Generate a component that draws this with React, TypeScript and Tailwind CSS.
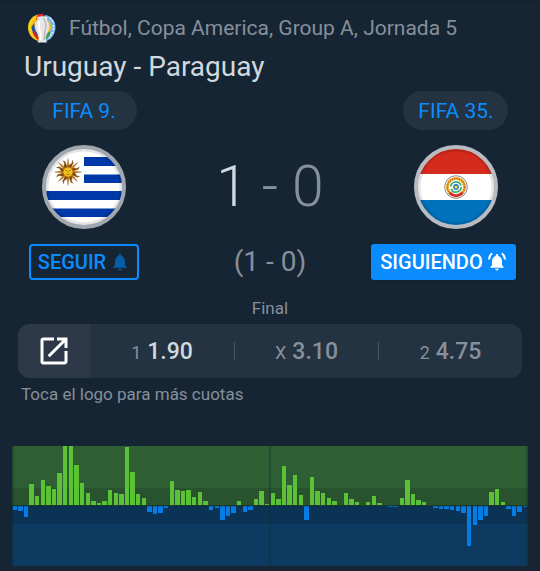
import React from "react";
import { MdNotifications, MdOpenInNew } from "react-icons/md";

type Bar = [x: number, width: number, value: number];

// Attack momentum: positive values belong to the home side, negative to the away side.
const bars: Bar[] = [
  [1, 4, -4], [6, 5, -5], [12, 4, -11], [17, 5, 21], [23, 4, 9], [29, 4, 25], [34, 5, 19], [40, 4, 16],
  [45, 5, 32], [51, 4, 59], [57, 4, 59], [62, 5, 40], [68, 4, 22], [74, 4, 12], [79, 5, 4], [85, 4, 2],
  [90, 5, 4], [96, 4, 15], [102, 4, 12], [107, 5, 11], [113, 4, 58], [118, 5, 33], [124, 4, 11], [130, 4, 7],
  [135, 5, -6], [141, 4, -8], [146, 5, -7], [152, 4, -2], [158, 4, 24], [163, 5, 15], [169, 4, 14], [174, 5, 15],
  [180, 4, 8], [186, 4, 13], [191, 5, 4], [197, 4, -4], [203, 4, -2], [208, 5, -14], [214, 4, -10], [219, 5, -7],
  [225, 4, 4], [231, 4, -6], [236, 5, -4], [242, 4, 6], [247, 5, 14], [253, 4, 1], [259, 4, 12], [264, 5, 6],
  [270, 4, 39], [275, 5, 20], [281, 4, 30], [287, 4, 10], [292, 5, -14], [298, 4, 28], [303, 5, 14], [309, 4, 12],
  [315, 4, 7], [320, 5, 4], [332, 4, 12], [337, 5, 6], [343, 4, 3], [354, 4, 3], [360, 4, 9], [365, 5, 2],
  [376, 5, -1], [382, 4, -1], [388, 4, 7], [393, 5, 25], [399, 4, 11], [404, 5, 5], [410, 4, 3], [421, 5, -2],
  [427, 4, -3], [432, 5, -3], [438, 4, -4], [444, 4, -5], [449, 5, -7], [455, 4, -40], [461, 4, -19], [466, 5, -14],
  [472, 4, -10], [477, 5, 13], [483, 4, 16], [489, 4, 3], [494, 5, -3], [500, 4, -10], [505, 5, -6], [511, 4, -1],
];

function MomentumChart() {
  return (
    <svg viewBox="0 0 516 120" preserveAspectRatio="none" className="block h-[120px] w-full" shapeRendering="crispEdges" role="img" aria-label="Momentum">
      <rect width="516" height="60" fill="#2e5f34" />
      <rect y="42" width="516" height="18" fill="#29532e" />
      <rect y="60" width="516" height="60" fill="#0d3a61" />
      <rect y="60" width="516" height="18" fill="#0b3355" />
      <g fill="#102c2c" fillOpacity="0.35">
        <rect width="2" height="120" />
        <rect x="257" width="2" height="120" />
        <rect x="514" width="2" height="120" />
      </g>
      {bars.map(([x, width, value]) => (
        <rect key={x} x={x} width={width} y={value > 0 ? 59 - value : 60} height={Math.abs(value)} fill={value > 0 ? "#5bc236" : "#047ce4"} />
      ))}
      <rect y="59" width="516" height="1" fill="#102c2c" fillOpacity="0.6" />
      <rect y="60" width="516" height="1" fill="#102c2c" fillOpacity="0.25" />
    </svg>
  );
}

function CupLogo() {
  return (
    <svg viewBox="0 0 30 30" className="size-[30px] shrink-0" aria-hidden="true">
      <path d="M11 1.5C5 3 1 8 1 14.500C1 21 5 26 11 28L13 25V4Z" fill="#f7d117" />
      <path d="M18 2C25 3 29 9 28.500 15C28 22 24 27 18 28.500L16 24V5Z" fill="#79b4e8" />
      <path d="M9 5.500C5 8 4 12 4.500 16L8 19V9Z" fill="#f5b21a" />
      <path d="M4.500 14C5 19 7 23 10.500 25L11 20C8 18 7 14 7.500 10Z" fill="#1c52a5" />
      <path d="M7 17.500L12 25L11 27C8 25 6 21 5.500 19Z" fill="#d92332" />
      <path d="M9 5L11 1.300L16 .8L17 3.500L13 4.500L10 8Z" fill="#e02b2d" />
      <path d="M21 8C25 10 25 18 20.500 22L19 18Z" fill="#f6c51b" />
      <path d="M18 21L23 18L23 23L18 27Z" fill="#39a34a" />
      <path d="M23 4.500L27 10M26.500 12V17M26 19L22 25" fill="none" stroke="#eaf5fd" strokeWidth="1.500" strokeDasharray="2 1" />
      <path d="M10 4Q15.500 2.500 20.500 4L20 7Q22.500 10 22 14Q21.500 19 19 23L18.500 26L20 29.500H10.500L12 26L11.500 23Q8.500 18 8 13Q8 9 10.500 7Z" fill="#e7e5e5" />
      <path d="M16.500 5L17.500 7Q20 12 18 18L17 27" fill="none" stroke="#bdb9ba" strokeWidth="1.500" />
      <path d="M12.500 8Q11 13 13.500 21V27" fill="none" stroke="#fff" strokeWidth="2" />
    </svg>
  );
}

function RingingBell() {
  return (
    <svg viewBox="0 0 24 24" className="size-5 shrink-0 overflow-visible" aria-hidden="true">
      <path d="M12 22c1.100 0 2-.9 2-2h-4c0 1.100.9 2 2 2zm6-6v-5c0-3.070-1.640-5.640-4.500-6.320V4c0-.83-.67-1.500-1.500-1.500s-1.500.67-1.500 1.500v.68C7.630 5.360 6 7.920 6 11v5l-2 2v1h16v-1l-2-2z" fill="currentColor" />
      <path d="M2.300 9C2.500 5.800 4 3.200 6.200 1.500M21.700 9C21.500 5.800 20 3.200 17.800 1.500" fill="none" stroke="currentColor" strokeWidth="2.400" />
    </svg>
  );
}

const rays = Array.from({ length: 16 }, (_, i) => i * 22.5);

function UruguayFlag() {
  return (
    <svg viewBox="0 0 84 84" className="size-[84px]" role="img" aria-label="Uruguay">
      <clipPath id="uy"><circle cx="42" cy="42" r="39" /></clipPath>
      <g clipPath="url(#uy)">
        <rect width="84" height="84" fill="#fff" />
        <path d="M42 12H84V21H42ZM42 29.500H84V38H42ZM0 46H84V55H0ZM0 63.500H84V72H0Z" fill="#0038a8" />
        <g transform="translate(26 27)">
          {rays.map((angle, i) => (
            <path key={angle} transform={`rotate(${angle})`} d={i % 2 === 0 ? "M-1.500 -4L0 -13.500L1.500 -4Z" : "M-1 -4Q-2.500 -7 0 -9Q.5 -11 -.5 -12.500Q2.500 -10.500 1 -8L1.500 -4Z"} fill={i % 2 === 0 ? "#c9821a" : "#7c480d"} stroke="#804c0d" strokeWidth=".3" />
          ))}
          <circle r="4.800" fill="#f5c21c" stroke="#b87a14" strokeWidth=".7" />
          <path d="M-2.800 -1.500H-1M1 -1.500H2.800M0 -1V1M-1.800 2.300Q0 3.200 1.800 2.300" stroke="#9a6510" strokeWidth=".7" fill="none" />
        </g>
        <circle cx="42" cy="42" r="37" fill="none" stroke="#000" strokeOpacity=".1" strokeWidth="3" />
      </g>
      <circle cx="42" cy="42" r="40" fill="none" stroke="#a1a7ae" strokeWidth="4" />
    </svg>
  );
}

function ParaguayFlag() {
  return (
    <svg viewBox="0 0 84 84" className="size-[84px]" role="img" aria-label="Paraguay">
      <clipPath id="py"><circle cx="42" cy="42" r="39" /></clipPath>
      <g clipPath="url(#py)">
        <rect width="84" height="84" fill="#fff" />
        <rect width="84" height="29" fill="#d52b1e" />
        <rect y="55" width="84" height="29" fill="#0072bc" />
        <circle cx="42" cy="42" r="11.300" fill="#fff" stroke="#7d7776" strokeWidth=".9" />
        <circle cx="42" cy="42" r="8.600" fill="none" stroke="#e9b92c" strokeWidth="3" />
        <circle cx="42" cy="42" r="8.600" fill="none" stroke="#d5402a" strokeWidth="1.200" strokeDasharray="1.200 1.200" />
        <path d="M35.500 47.800Q42 54 48.500 47.800" fill="none" stroke="#d02c35" strokeWidth="2.600" />
        <circle cx="42" cy="42" r="5.200" fill="none" stroke="#3db083" strokeWidth="1.800" strokeDasharray="14 2.300" />
        <circle cx="42" cy="42" r="2.900" fill="#1674bb" />
        <path d="M42 39.800L42.700 41.300L44.300 41.500L43.100 42.500L43.500 44L42 43.200L40.500 44L40.900 42.500L39.700 41.500L41.300 41.300Z" fill="#f9dc3a" />
        <circle cx="42" cy="42" r="37" fill="none" stroke="#000" strokeOpacity=".1" strokeWidth="3" />
      </g>
      <circle cx="42" cy="42" r="40" fill="none" stroke="#b8bbc1" strokeWidth="4" />
    </svg>
  );
}

function Ranking({ children }: { children: React.ReactNode }) {
  return <div className="flex h-[39px] w-[105px] items-center justify-center rounded-full bg-[#243341] text-[21px] leading-7 text-[#0a8cff]">{children}</div>;
}

const odds = [
  { label: "1", value: "1.90", won: true },
  { label: "X", value: "3.10", won: false },
  { label: "2", value: "4.75", won: false },
];

export default function App() {
  return (
    <main className="min-h-screen bg-[#162533] font-['Roboto',sans-serif] text-[#868f9c]">
      <header className="border-t-2 border-[#14212e] px-6 pt-[10px]">
        <div className="flex h-8 items-center gap-3 pl-[3px]">
          <CupLogo />
          <p className="whitespace-nowrap text-[21px] leading-8">Fútbol, Copa America, Group A, Jornada 5</p>
        </div>
        <h1 className="mt-[5px] text-[28px] font-normal leading-9 text-[#cfd9df]">Uruguay - Paraguay</h1>
      </header>

      <section className="mt-[6px] flex justify-between">
        <div className="flex w-[168px] flex-col items-center">
          <Ranking>FIFA 9.</Ranking>
          <div className="mt-[15px]"><UruguayFlag /></div>
          <button type="button" className="mt-[15px] flex h-9 w-[110px] items-center justify-center gap-1 rounded-[4px] border-2 border-[#0a8cff] text-[20px] font-medium leading-6 text-[#0a8cff]">
            SEGUIR
            <MdNotifications className="size-5 shrink-0 text-[#075da8]" aria-hidden="true" />
          </button>
        </div>

        <div className="flex flex-col items-center pt-[60px]">
          <p className="whitespace-nowrap text-[57px] font-light leading-[72px]">
            <span className="text-[#cfd9df]">1</span> - 0
          </p>
          <p className="mt-[21px] whitespace-nowrap text-[28px] leading-9">(1 - 0)</p>
        </div>

        <div className="flex w-[168px] flex-col items-center">
          <Ranking>FIFA 35.</Ranking>
          <div className="mt-[15px]"><ParaguayFlag /></div>
          <button type="button" className="mt-[15px] mr-6 flex h-9 w-[145px] items-center justify-center gap-1 self-end rounded-[3px] bg-[#0a8cff] text-[20px] font-medium leading-6 text-white shadow-sm">
            SIGUIENDO
            <RingingBell />
          </button>
        </div>
      </section>

      <p className="mt-4 text-center text-[17px] leading-6">Final</p>

      <section className="mx-[18px] mt-1">
        <div className="flex h-[54px] overflow-hidden rounded-xl bg-[#243341]">
          <button type="button" aria-label="Abrir cuotas" className="flex w-[72px] shrink-0 items-center justify-center bg-[#2d3949] text-white">
            <MdOpenInNew className="size-9" aria-hidden="true" />
          </button>
          <ul className="grid flex-1 grid-cols-3 items-center">
            {odds.map(({ label, value, won }, i) => (
              <li key={label} className={i > 0 ? "flex h-[18px] items-center justify-center border-l border-[#475462]" : "flex h-[18px] items-center justify-center"}>
                <div className="flex items-baseline gap-[6px] pt-[2px]">
                  <span className="text-[18px] leading-7">{label}</span>
                  <span className={won ? "text-[23px] font-medium leading-7 text-[#cfd9df]" : "text-[23px] font-medium leading-7"}>{value}</span>
                </div>
              </li>
            ))}
          </ul>
        </div>
        <p className="mt-1 ml-[3px] text-[17px] leading-6">Toca el logo para más cuotas</p>
      </section>

      <section className="mx-3 mt-10">
        <MomentumChart />
      </section>
    </main>
  );
}
